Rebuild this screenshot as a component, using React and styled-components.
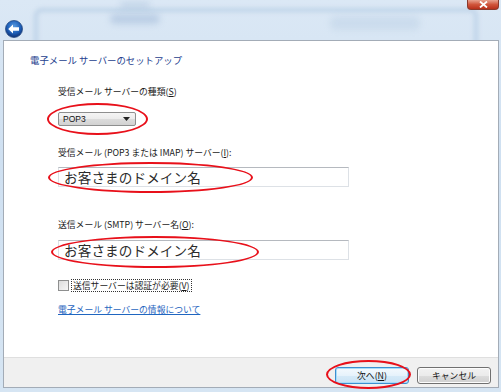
import React from "react";
import styled, { createGlobalStyle } from "styled-components";

const Global = createGlobalStyle`
  html, body { margin: 0; padding: 0; }
  body { font-family: "Noto Sans CJK JP", "Noto Sans", sans-serif; }
`;

const Window = styled.div`
  position: relative;
  width: 501px;
  height: 392px;
  overflow: hidden;
  background: linear-gradient(180deg, #dbe8f5 0%, #cfe0f1 40%, #d6e5f3 100%);
  display: flex;
  flex-direction: column;
`;

const Ghost = styled.div`
  position: absolute;
  left: 34px;
  top: 8px;
  width: 436px;
  height: 44px;
  border: 4px solid rgba(170, 195, 222, 0.55);
  border-radius: 8px;
  filter: blur(2px);
  pointer-events: none;
`;

const GhostBlob = styled.div`
  position: absolute;
  left: ${(p) => p.$l}px;
  top: ${(p) => p.$t}px;
  width: ${(p) => p.$w}px;
  height: ${(p) => p.$h}px;
  border-radius: 6px;
  background: rgba(150, 178, 210, ${(p) => p.$a});
  filter: blur(3px);
  pointer-events: none;
`;

const TitleBar = styled.div`
  position: relative;
  height: 40px;
  flex: none;
  display: flex;
  align-items: flex-start;
  justify-content: space-between;
`;

const BackButton = styled.div`
  margin: 19px 0 0 5px;
  width: 18px;
  height: 18px;
`;

const CloseButton = styled.div`
  width: 32px;
  height: 10px;
  margin-right: 2px;
  border: 1px solid #8a3a2c;
  border-top: none;
  border-radius: 0 0 4px 4px;
  background: linear-gradient(180deg, #e8a28f 0%, #d0553b 50%, #b8301b 100%);
  display: flex;
  align-items: center;
  justify-content: center;
  box-sizing: border-box;
`;

const Panel = styled.div`
  position: relative;
  margin: 0 2px 0 3px;
  height: 348px;
  box-sizing: border-box;
  border: 1px solid #a3acb7;
  display: flex;
  flex-direction: column;
  background: #fff;
`;

const Content = styled.div`
  flex: 1;
  padding-top: 13px;
  color: #000;
  font-size: 9px;
`;

const Heading = styled.div`
  margin-left: 26px;
  line-height: 12px;
  font-size: 9.4px;
  color: #24408e;
`;

const Form = styled.div`
  padding-left: 54px;
  display: flex;
  flex-direction: column;
  align-items: flex-start;
`;

const Field = styled.div`
  margin-top: ${(p) => p.$mt}px;
  display: flex;
  flex-direction: column;
  align-items: flex-start;
  gap: ${(p) => p.$gap}px;
`;

const Label = styled.div`
  line-height: 12px;
  font-size: 8.8px;
  color: #1a1a1a;
  u { text-decoration: underline; }
`;

const Anchor = styled.div`
  position: relative;
`;

const Ring = styled.span`
  position: absolute;
  left: ${(p) => p.$l}px;
  top: ${(p) => p.$t}px;
  width: ${(p) => p.$w}px;
  height: ${(p) => p.$h}px;
  border: 2px solid #e8101a;
  border-radius: 50%;
  box-sizing: border-box;
  pointer-events: none;
`;

const Select = styled.div`
  width: 78px;
  height: 14px;
  box-sizing: border-box;
  border: 1px solid #8e8f8f;
  border-radius: 2px;
  background: linear-gradient(180deg, #f5f5f5 0%, #ececec 50%, #dcdcdc 51%, #d2d2d2 100%);
  display: flex;
  align-items: center;
  justify-content: space-between;
  padding: 0 5px 0 4px;
  font-family: "Liberation Sans", Arial, sans-serif;
  font-size: 8.5px;
  color: #111;
`;

const Input = styled.div`
  width: 291px;
  height: 20px;
  box-sizing: border-box;
  border: 1px solid #dde1e6;
  border-top-color: #b5b9bf;
  background: #fff;
  display: flex;
  align-items: center;
  padding-left: 5px;
  font-size: 13.6px;
  color: #2b2b2b;
  letter-spacing: 0.1px;
`;

const CheckRow = styled.div`
  margin-top: 19px;
  display: flex;
  align-items: center;
  gap: 2px;
`;

const Box = styled.span`
  width: 9px;
  height: 9px;
  border: 1px solid #8e8f8f;
  background: linear-gradient(135deg, #dcdcdc 0%, #f6f6f6 100%);
`;

const FocusLabel = styled.span`
  border: 1px dotted #333;
  padding: 0 1px;
  line-height: 11px;
  font-size: 8.8px;
  color: #1a1a1a;
  u { text-decoration: underline; }
`;

const Link = styled.a`
  margin-top: 12px;
  line-height: 12px;
  font-size: 8.8px;
  color: #1f66c0;
  text-decoration: underline;
`;

const Footer = styled.div`
  height: 30px;
  flex: none;
  background: #f0f0f0;
  border-top: 1px solid #dfdfdf;
  display: flex;
  align-items: flex-start;
  justify-content: flex-end;
  gap: 8px;
  padding: 9px 7px 0 0;
  box-sizing: border-box;
`;

const Button = styled.div`
  width: 74px;
  height: 17px;
  box-sizing: border-box;
  border: 1px solid ${(p) => (p.$default ? "#3c8fd0" : "#707070")};
  border-radius: 3px;
  background: ${(p) =>
    p.$default
      ? "linear-gradient(180deg, #f4f9fd 0%, #e6f2fb 50%, #d6eaf8 51%, #cbe3f5 100%)"
      : "linear-gradient(180deg, #f2f2f2 0%, #ebebeb 50%, #dddddd 51%, #cfcfcf 100%)"};
  box-shadow: ${(p) => (p.$default ? "inset 0 0 0 1px #a8dcf8" : "inset 0 0 0 1px #fcfcfc")};
  display: flex;
  align-items: center;
  justify-content: center;
  font-size: 8.8px;
  color: #111;
  u { text-decoration: underline; }
`;

const BackIcon = () => (
  <svg width="18" height="18" viewBox="0 0 18 18">
    <defs>
      <radialGradient id="bg" cx="50%" cy="35%" r="65%">
        <stop offset="0%" stopColor="#5b9be0" />
        <stop offset="60%" stopColor="#1d5fb8" />
        <stop offset="100%" stopColor="#0c2f74" />
      </radialGradient>
    </defs>
    <circle cx="9" cy="9" r="8.5" fill="url(#bg)" stroke="#2a4d84" strokeWidth="0.8" />
    <path d="M3.2 9 L8 4.6 L8 7.2 L14 7.2 L14 10.8 L8 10.8 L8 13.4 Z" fill="#fff" />
  </svg>
);

export default function App() {
  return (
    <>
      <Global />
      <Window>
        <Ghost />
        <GhostBlob $l={110} $t={14} $w={50} $h={10} $a={0.45} />
        <GhostBlob $l={120} $t={2} $w={30} $h={6} $a={0.35} />
        <GhostBlob $l={330} $t={16} $w={90} $h={14} $a={0.2} />
        <TitleBar>
          <BackButton>
            <BackIcon />
          </BackButton>
          <CloseButton>
            <svg width="9" height="7" viewBox="0 0 9 7">
              <path d="M1 0.5 L8 6.5 M8 0.5 L1 6.5" stroke="#fff" strokeWidth="1.8" />
            </svg>
          </CloseButton>
        </TitleBar>
        <Panel>
          <Content>
            <Heading>電子メール サーバーのセットアップ</Heading>
            <Form>
              <Field $mt={20} $gap={14}>
                <Label>受信メール サーバーの種類(<u>S</u>)</Label>
                <Anchor>
                  <Select>
                    <span>POP3</span>
                    <svg width="7" height="4" viewBox="0 0 7 4">
                      <path d="M0 0 L7 0 L3.5 4 Z" fill="#222" />
                    </svg>
                  </Select>
                  <Ring $l={-11} $t={-9} $w={101} $h={32} />
                </Anchor>
              </Field>
              <Field $mt={21} $gap={8}>
                <Label>受信メール (POP3 または IMAP) サーバー(<u>I</u>):</Label>
                <Anchor>
                  <Input>お客さまのドメイン名</Input>
                  <Ring $l={-10} $t={-5} $w={205} $h={31} />
                </Anchor>
              </Field>
              <Field $mt={32} $gap={9}>
                <Label>送信メール (SMTP) サーバー名(<u>O</u>):</Label>
                <Anchor>
                  <Input>お客さまのドメイン名</Input>
                  <Ring $l={-7} $t={-4} $w={208} $h={32} />
                </Anchor>
              </Field>
              <CheckRow>
                <Box />
                <FocusLabel>送信サーバーは認証が必要(<u>V</u>)</FocusLabel>
              </CheckRow>
              <Link href="#">電子メール サーバーの情報について</Link>
            </Form>
          </Content>
          <Footer>
            <Anchor>
              <Button $default>
                次へ(<u>N</u>)
              </Button>
              <Ring $l={-9} $t={-7} $w={85} $h={29} />
            </Anchor>
            <Button>キャンセル</Button>
          </Footer>
        </Panel>
      </Window>
    </>
  );
}
